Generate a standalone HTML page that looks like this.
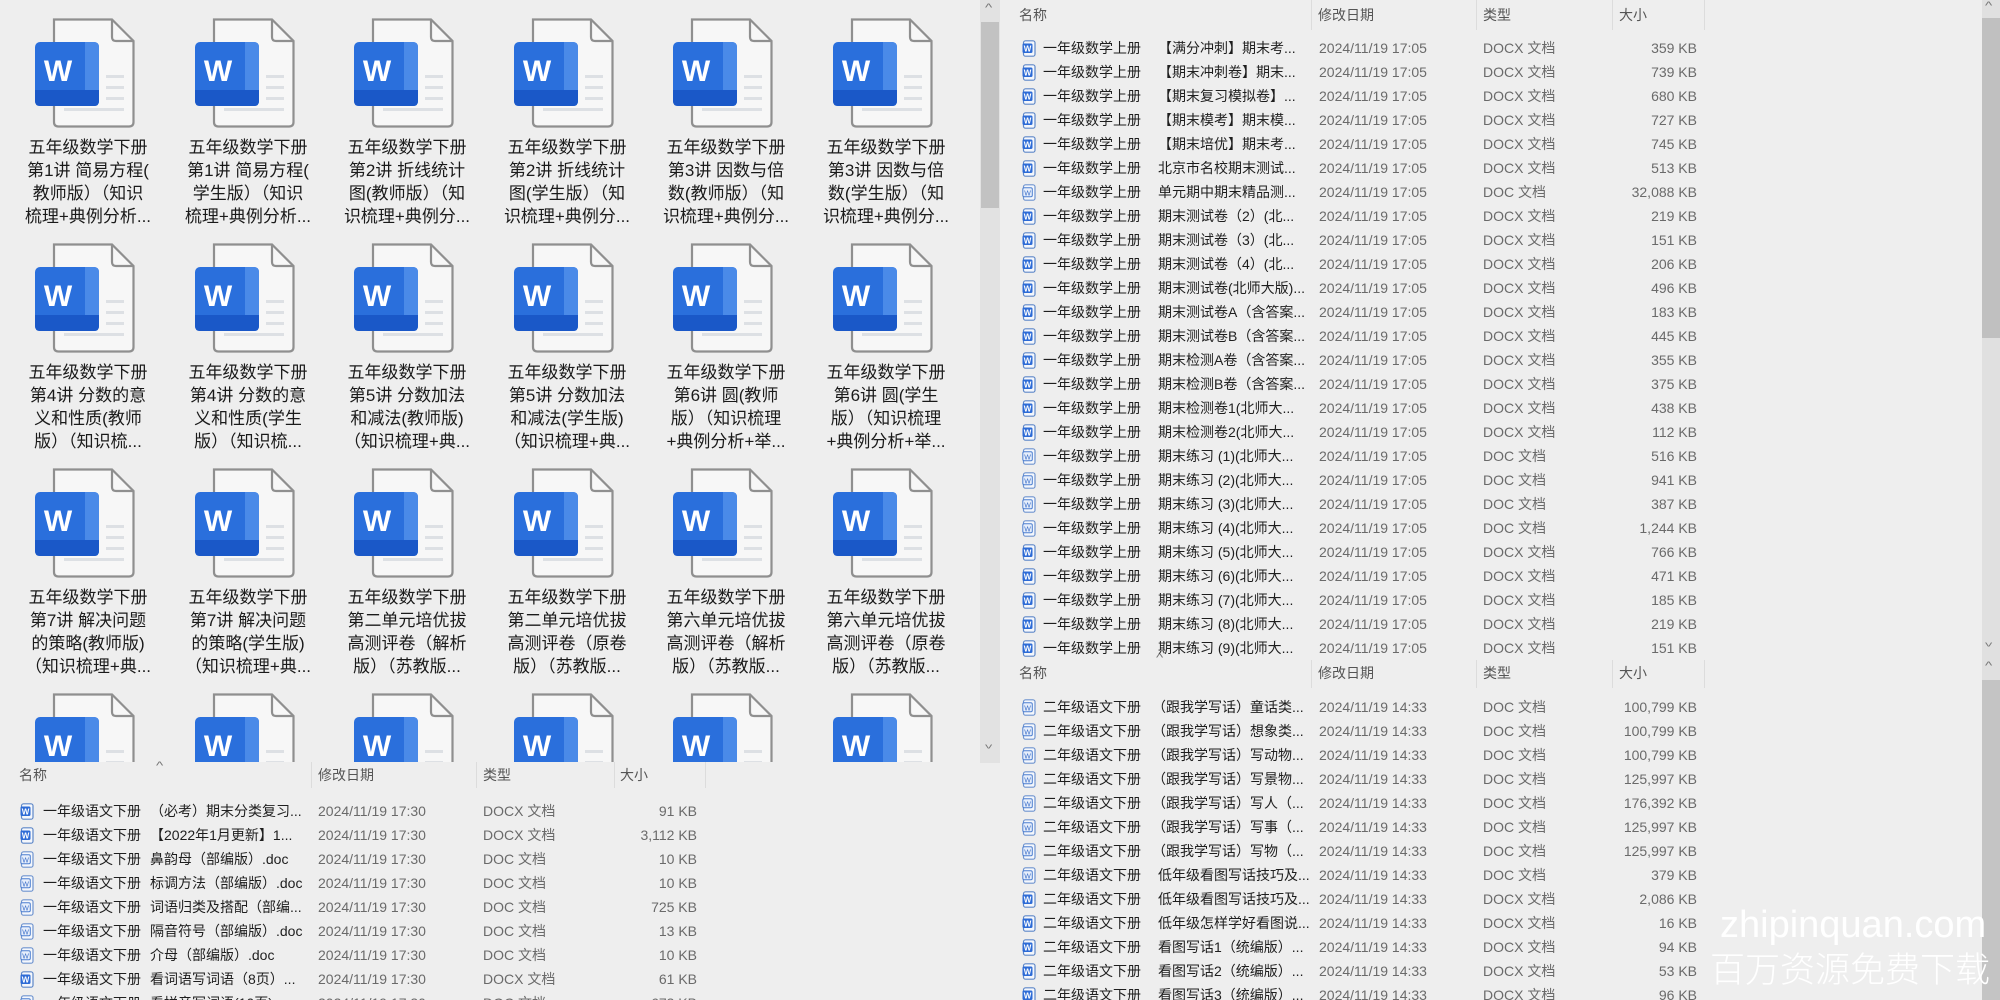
<!DOCTYPE html>
<html><head><meta charset="utf-8">
<style>
*{margin:0;padding:0;box-sizing:border-box}
body{width:2000px;height:1000px;overflow:hidden;background:#eeeeee;position:relative;font-family:"Liberation Sans","Noto Sans CJK SC",sans-serif;}
.a{position:absolute}
.lbl{position:absolute;width:150px;text-align:center;font-size:17px;line-height:23px;color:#1a1a1a;font-family:"Liberation Sans","Noto Sans CJK SC",sans-serif}
.ic{position:absolute;width:100px;height:110px}
.r{position:absolute;height:24px;line-height:24px;font-size:14px;white-space:nowrap}
.r span{position:absolute;top:0}
.n{color:#1e1e1e}
.g{color:#6a6a6a}
.sz{text-align:right;width:120px}
.si{position:absolute;top:4px;width:14px;height:17px}
.hd{position:absolute;font-size:14px;color:#555;height:24px;line-height:24px}
.sep{position:absolute;width:1px;background:#dcdcdc}
.car{position:absolute;font-size:11px;color:#777;transform:scaleX(1.4)}
</style></head><body>
<svg width="0" height="0" style="position:absolute">
<defs>
<symbol id="big" viewBox="0 0 100 110">
<path d="M19 1.5 H77 L98.5 23 V104 Q98.5 108.5 94 108.5 H23.5 Q19 108.5 19 104 Z" fill="#f7f7f7" stroke="#8f8f8f" stroke-width="2.2"/>
<path d="M77 1.5 V19 Q77 23 81 23 H98.5" fill="none" stroke="#8f8f8f" stroke-width="2.2"/>
<rect x="71" y="57" width="18" height="3" fill="#dde0e4"/>
<rect x="71" y="68" width="18" height="3" fill="#dde0e4"/>
<rect x="71" y="79" width="18" height="3" fill="#dde0e4"/>
<rect x="29" y="90" width="60" height="3" fill="#dde0e4"/>
<rect x="0" y="24" width="64" height="64" rx="5" fill="#2a6fdc"/>
<path d="M50 24 H59 Q64 24 64 29 V83 Q64 88 59 88 H50 Z" fill="#4a8ae8"/>
<path d="M0 72 H64 V83 Q64 88 59 88 H5 Q0 88 0 83 Z" fill="#1a58c8"/>
<text x="23" y="63" font-family="Liberation Sans" font-weight="bold" font-size="30" fill="#fff" text-anchor="middle">W</text>
</symbol>
<symbol id="sx" viewBox="0 0 14 17">
<rect x="1.5" y="0.8" width="11.5" height="15.4" rx="2" fill="#f4f7fc" stroke="#5d87c8" stroke-width="1.2"/>
<rect x="0.5" y="3.5" width="10" height="9.5" rx="1.5" fill="#2d6bd6"/>
<text x="5.5" y="11.5" font-family="Liberation Sans" font-weight="bold" font-size="8" fill="#fff" text-anchor="middle">W</text>
</symbol>
<symbol id="sd" viewBox="0 0 14 17">
<rect x="1.5" y="0.8" width="11.5" height="15.4" rx="2" fill="#f4f7fc" stroke="#6f94cf" stroke-width="1.2"/>
<rect x="0.8" y="3.8" width="9.5" height="9" rx="1.5" fill="#e6eefb" stroke="#4d7fd0" stroke-width="1"/>
<text x="5.5" y="11.3" font-family="Liberation Sans" font-size="7" fill="#3c6fc8" text-anchor="middle">W</text>
</symbol>
</defs></svg>

<!-- Left grid -->
<div class="a" style="left:0;top:0;width:980px;height:762px;overflow:hidden">
<svg class="ic" style="left:35px;top:18px"><use href="#big"/></svg>
<svg class="ic" style="left:195px;top:18px"><use href="#big"/></svg>
<svg class="ic" style="left:354px;top:18px"><use href="#big"/></svg>
<svg class="ic" style="left:514px;top:18px"><use href="#big"/></svg>
<svg class="ic" style="left:673px;top:18px"><use href="#big"/></svg>
<svg class="ic" style="left:833px;top:18px"><use href="#big"/></svg>
<svg class="ic" style="left:35px;top:243px"><use href="#big"/></svg>
<svg class="ic" style="left:195px;top:243px"><use href="#big"/></svg>
<svg class="ic" style="left:354px;top:243px"><use href="#big"/></svg>
<svg class="ic" style="left:514px;top:243px"><use href="#big"/></svg>
<svg class="ic" style="left:673px;top:243px"><use href="#big"/></svg>
<svg class="ic" style="left:833px;top:243px"><use href="#big"/></svg>
<svg class="ic" style="left:35px;top:468px"><use href="#big"/></svg>
<svg class="ic" style="left:195px;top:468px"><use href="#big"/></svg>
<svg class="ic" style="left:354px;top:468px"><use href="#big"/></svg>
<svg class="ic" style="left:514px;top:468px"><use href="#big"/></svg>
<svg class="ic" style="left:673px;top:468px"><use href="#big"/></svg>
<svg class="ic" style="left:833px;top:468px"><use href="#big"/></svg>
<svg class="ic" style="left:35px;top:693px"><use href="#big"/></svg>
<svg class="ic" style="left:195px;top:693px"><use href="#big"/></svg>
<svg class="ic" style="left:354px;top:693px"><use href="#big"/></svg>
<svg class="ic" style="left:514px;top:693px"><use href="#big"/></svg>
<svg class="ic" style="left:673px;top:693px"><use href="#big"/></svg>
<svg class="ic" style="left:833px;top:693px"><use href="#big"/></svg>

<div class="lbl" style="left:13px;top:136px">五年级数学下册<br>第1讲 简易方程(<br>教师版）（知识<br>梳理+典例分析...</div>
<div class="lbl" style="left:173px;top:136px">五年级数学下册<br>第1讲 简易方程(<br>学生版）（知识<br>梳理+典例分析...</div>
<div class="lbl" style="left:332px;top:136px">五年级数学下册<br>第2讲 折线统计<br>图(教师版）（知<br>识梳理+典例分...</div>
<div class="lbl" style="left:492px;top:136px">五年级数学下册<br>第2讲 折线统计<br>图(学生版）（知<br>识梳理+典例分...</div>
<div class="lbl" style="left:651px;top:136px">五年级数学下册<br>第3讲 因数与倍<br>数(教师版）（知<br>识梳理+典例分...</div>
<div class="lbl" style="left:811px;top:136px">五年级数学下册<br>第3讲 因数与倍<br>数(学生版）（知<br>识梳理+典例分...</div>

<div class="lbl" style="left:13px;top:361px">五年级数学下册<br>第4讲 分数的意<br>义和性质(教师<br>版）（知识梳...</div>
<div class="lbl" style="left:173px;top:361px">五年级数学下册<br>第4讲 分数的意<br>义和性质(学生<br>版）（知识梳...</div>
<div class="lbl" style="left:332px;top:361px">五年级数学下册<br>第5讲 分数加法<br>和减法(教师版)<br>（知识梳理+典...</div>
<div class="lbl" style="left:492px;top:361px">五年级数学下册<br>第5讲 分数加法<br>和减法(学生版)<br>（知识梳理+典...</div>
<div class="lbl" style="left:651px;top:361px">五年级数学下册<br>第6讲 圆(教师<br>版）（知识梳理<br>+典例分析+举...</div>
<div class="lbl" style="left:811px;top:361px">五年级数学下册<br>第6讲 圆(学生<br>版）（知识梳理<br>+典例分析+举...</div>

<div class="lbl" style="left:13px;top:586px">五年级数学下册<br>第7讲 解决问题<br>的策略(教师版)<br>（知识梳理+典...</div>
<div class="lbl" style="left:173px;top:586px">五年级数学下册<br>第7讲 解决问题<br>的策略(学生版)<br>（知识梳理+典...</div>
<div class="lbl" style="left:332px;top:586px">五年级数学下册<br>第二单元培优拔<br>高测评卷（解析<br>版）（苏教版...</div>
<div class="lbl" style="left:492px;top:586px">五年级数学下册<br>第二单元培优拔<br>高测评卷（原卷<br>版）（苏教版...</div>
<div class="lbl" style="left:651px;top:586px">五年级数学下册<br>第六单元培优拔<br>高测评卷（解析<br>版）（苏教版...</div>
<div class="lbl" style="left:811px;top:586px">五年级数学下册<br>第六单元培优拔<br>高测评卷（原卷<br>版）（苏教版...</div>
</div>
<!-- left scrollbar -->
<div class="a" style="left:980px;top:0;width:20px;height:763px;background:#e2e2e2"></div>
<div class="a" style="left:981px;top:22px;width:18px;height:186px;background:#c2c2c2"></div>
<div class="car" style="left:986px;top:2px">^</div>
<div class="car" style="left:986px;top:738px;transform:scaleX(1.4) rotate(180deg)">^</div>

<!-- bottom-left details -->
<div class="a" style="left:0;top:762px;width:980px;height:238px;background:#eeeeee">
<div class="car" style="left:157px;top:-2px">^</div>
<div class="hd" style="left:19px;top:1px">名称</div>
<div class="sep" style="left:311px;top:0;height:26px"></div>
<div class="hd" style="left:318px;top:1px">修改日期</div>
<div class="sep" style="left:476px;top:0;height:26px"></div>
<div class="hd" style="left:483px;top:1px">类型</div>
<div class="sep" style="left:614px;top:0;height:26px"></div>
<div class="hd" style="left:620px;top:1px">大小</div>
<div class="sep" style="left:705px;top:0;height:26px"></div>
</div>
<div class="a" style="left:0;top:799px;width:980px;height:201px;overflow:hidden">
<div class="r" style="top:0;width:980px"><svg class="si" style="left:20px"><use href="#sx"/></svg><span class="n" style="left:43px">一年级语文下册</span><span class="n" style="left:150px">（必考）期末分类复习...</span><span class="g" style="left:318px">2024/11/19 17:30</span><span class="g" style="left:483px">DOCX 文档</span><span class="g sz" style="left:577px">91 KB</span></div>
<div class="r" style="top:24px;width:980px"><svg class="si" style="left:20px"><use href="#sx"/></svg><span class="n" style="left:43px">一年级语文下册</span><span class="n" style="left:150px">【2022年1月更新】1...</span><span class="g" style="left:318px">2024/11/19 17:30</span><span class="g" style="left:483px">DOCX 文档</span><span class="g sz" style="left:577px">3,112 KB</span></div>
<div class="r" style="top:48px;width:980px"><svg class="si" style="left:20px"><use href="#sd"/></svg><span class="n" style="left:43px">一年级语文下册</span><span class="n" style="left:150px">鼻韵母（部编版）.doc</span><span class="g" style="left:318px">2024/11/19 17:30</span><span class="g" style="left:483px">DOC 文档</span><span class="g sz" style="left:577px">10 KB</span></div>
<div class="r" style="top:72px;width:980px"><svg class="si" style="left:20px"><use href="#sd"/></svg><span class="n" style="left:43px">一年级语文下册</span><span class="n" style="left:150px">标调方法（部编版）.doc</span><span class="g" style="left:318px">2024/11/19 17:30</span><span class="g" style="left:483px">DOC 文档</span><span class="g sz" style="left:577px">10 KB</span></div>
<div class="r" style="top:96px;width:980px"><svg class="si" style="left:20px"><use href="#sd"/></svg><span class="n" style="left:43px">一年级语文下册</span><span class="n" style="left:150px">词语归类及搭配（部编...</span><span class="g" style="left:318px">2024/11/19 17:30</span><span class="g" style="left:483px">DOC 文档</span><span class="g sz" style="left:577px">725 KB</span></div>
<div class="r" style="top:120px;width:980px"><svg class="si" style="left:20px"><use href="#sd"/></svg><span class="n" style="left:43px">一年级语文下册</span><span class="n" style="left:150px">隔音符号（部编版）.doc</span><span class="g" style="left:318px">2024/11/19 17:30</span><span class="g" style="left:483px">DOC 文档</span><span class="g sz" style="left:577px">13 KB</span></div>
<div class="r" style="top:144px;width:980px"><svg class="si" style="left:20px"><use href="#sd"/></svg><span class="n" style="left:43px">一年级语文下册</span><span class="n" style="left:150px">介母（部编版）.doc</span><span class="g" style="left:318px">2024/11/19 17:30</span><span class="g" style="left:483px">DOC 文档</span><span class="g sz" style="left:577px">10 KB</span></div>
<div class="r" style="top:168px;width:980px"><svg class="si" style="left:20px"><use href="#sx"/></svg><span class="n" style="left:43px">一年级语文下册</span><span class="n" style="left:150px">看词语写词语（8页）...</span><span class="g" style="left:318px">2024/11/19 17:30</span><span class="g" style="left:483px">DOCX 文档</span><span class="g sz" style="left:577px">61 KB</span></div>
<div class="r" style="top:192px;width:980px"><svg class="si" style="left:20px"><use href="#sd"/></svg><span class="n" style="left:43px">一年级语文下册</span><span class="n" style="left:150px">看拼音写词语(10页)...</span><span class="g" style="left:318px">2024/11/19 17:30</span><span class="g" style="left:483px">DOC 文档</span><span class="g sz" style="left:577px">673 KB</span></div>
</div>

<!-- right top -->
<div class="car" style="left:1157px;top:-6px">^</div>
<div class="hd" style="left:1019px;top:3px">名称</div>
<div class="sep" style="left:1311px;top:0;height:30px"></div>
<div class="hd" style="left:1318px;top:3px">修改日期</div>
<div class="sep" style="left:1476px;top:0;height:30px"></div>
<div class="hd" style="left:1483px;top:3px">类型</div>
<div class="sep" style="left:1612px;top:0;height:30px"></div>
<div class="hd" style="left:1619px;top:3px">大小</div>
<div class="sep" style="left:1704px;top:0;height:30px"></div>

<div class="a" style="left:1000px;top:36px;width:980px;height:624px">
<div class="r" style="top:0;width:980px"><svg class="si" style="left:22px"><use href="#sx"/></svg><span class="n" style="left:43px">一年级数学上册</span><span class="n" style="left:158px">【满分冲刺】期末考...</span><span class="g" style="left:319px">2024/11/19 17:05</span><span class="g" style="left:483px">DOCX 文档</span><span class="g sz" style="left:577px">359 KB</span></div>
<div class="r" style="top:24px;width:980px"><svg class="si" style="left:22px"><use href="#sx"/></svg><span class="n" style="left:43px">一年级数学上册</span><span class="n" style="left:158px">【期末冲刺卷】期末...</span><span class="g" style="left:319px">2024/11/19 17:05</span><span class="g" style="left:483px">DOCX 文档</span><span class="g sz" style="left:577px">739 KB</span></div>
<div class="r" style="top:48px;width:980px"><svg class="si" style="left:22px"><use href="#sx"/></svg><span class="n" style="left:43px">一年级数学上册</span><span class="n" style="left:158px">【期末复习模拟卷】...</span><span class="g" style="left:319px">2024/11/19 17:05</span><span class="g" style="left:483px">DOCX 文档</span><span class="g sz" style="left:577px">680 KB</span></div>
<div class="r" style="top:72px;width:980px"><svg class="si" style="left:22px"><use href="#sx"/></svg><span class="n" style="left:43px">一年级数学上册</span><span class="n" style="left:158px">【期末模考】期末模...</span><span class="g" style="left:319px">2024/11/19 17:05</span><span class="g" style="left:483px">DOCX 文档</span><span class="g sz" style="left:577px">727 KB</span></div>
<div class="r" style="top:96px;width:980px"><svg class="si" style="left:22px"><use href="#sx"/></svg><span class="n" style="left:43px">一年级数学上册</span><span class="n" style="left:158px">【期末培优】期末考...</span><span class="g" style="left:319px">2024/11/19 17:05</span><span class="g" style="left:483px">DOCX 文档</span><span class="g sz" style="left:577px">745 KB</span></div>
<div class="r" style="top:120px;width:980px"><svg class="si" style="left:22px"><use href="#sx"/></svg><span class="n" style="left:43px">一年级数学上册</span><span class="n" style="left:158px">北京市名校期末测试...</span><span class="g" style="left:319px">2024/11/19 17:05</span><span class="g" style="left:483px">DOCX 文档</span><span class="g sz" style="left:577px">513 KB</span></div>
<div class="r" style="top:144px;width:980px"><svg class="si" style="left:22px"><use href="#sd"/></svg><span class="n" style="left:43px">一年级数学上册</span><span class="n" style="left:158px">单元期中期末精品测...</span><span class="g" style="left:319px">2024/11/19 17:05</span><span class="g" style="left:483px">DOC 文档</span><span class="g sz" style="left:577px">32,088 KB</span></div>
<div class="r" style="top:168px;width:980px"><svg class="si" style="left:22px"><use href="#sx"/></svg><span class="n" style="left:43px">一年级数学上册</span><span class="n" style="left:158px">期末测试卷（2）(北...</span><span class="g" style="left:319px">2024/11/19 17:05</span><span class="g" style="left:483px">DOCX 文档</span><span class="g sz" style="left:577px">219 KB</span></div>
<div class="r" style="top:192px;width:980px"><svg class="si" style="left:22px"><use href="#sx"/></svg><span class="n" style="left:43px">一年级数学上册</span><span class="n" style="left:158px">期末测试卷（3）(北...</span><span class="g" style="left:319px">2024/11/19 17:05</span><span class="g" style="left:483px">DOCX 文档</span><span class="g sz" style="left:577px">151 KB</span></div>
<div class="r" style="top:216px;width:980px"><svg class="si" style="left:22px"><use href="#sx"/></svg><span class="n" style="left:43px">一年级数学上册</span><span class="n" style="left:158px">期末测试卷（4）(北...</span><span class="g" style="left:319px">2024/11/19 17:05</span><span class="g" style="left:483px">DOCX 文档</span><span class="g sz" style="left:577px">206 KB</span></div>
<div class="r" style="top:240px;width:980px"><svg class="si" style="left:22px"><use href="#sx"/></svg><span class="n" style="left:43px">一年级数学上册</span><span class="n" style="left:158px">期末测试卷(北师大版)...</span><span class="g" style="left:319px">2024/11/19 17:05</span><span class="g" style="left:483px">DOCX 文档</span><span class="g sz" style="left:577px">496 KB</span></div>
<div class="r" style="top:264px;width:980px"><svg class="si" style="left:22px"><use href="#sx"/></svg><span class="n" style="left:43px">一年级数学上册</span><span class="n" style="left:158px">期末测试卷A（含答案...</span><span class="g" style="left:319px">2024/11/19 17:05</span><span class="g" style="left:483px">DOCX 文档</span><span class="g sz" style="left:577px">183 KB</span></div>
<div class="r" style="top:288px;width:980px"><svg class="si" style="left:22px"><use href="#sx"/></svg><span class="n" style="left:43px">一年级数学上册</span><span class="n" style="left:158px">期末测试卷B（含答案...</span><span class="g" style="left:319px">2024/11/19 17:05</span><span class="g" style="left:483px">DOCX 文档</span><span class="g sz" style="left:577px">445 KB</span></div>
<div class="r" style="top:312px;width:980px"><svg class="si" style="left:22px"><use href="#sx"/></svg><span class="n" style="left:43px">一年级数学上册</span><span class="n" style="left:158px">期末检测A卷（含答案...</span><span class="g" style="left:319px">2024/11/19 17:05</span><span class="g" style="left:483px">DOCX 文档</span><span class="g sz" style="left:577px">355 KB</span></div>
<div class="r" style="top:336px;width:980px"><svg class="si" style="left:22px"><use href="#sx"/></svg><span class="n" style="left:43px">一年级数学上册</span><span class="n" style="left:158px">期末检测B卷（含答案...</span><span class="g" style="left:319px">2024/11/19 17:05</span><span class="g" style="left:483px">DOCX 文档</span><span class="g sz" style="left:577px">375 KB</span></div>
<div class="r" style="top:360px;width:980px"><svg class="si" style="left:22px"><use href="#sx"/></svg><span class="n" style="left:43px">一年级数学上册</span><span class="n" style="left:158px">期末检测卷1(北师大...</span><span class="g" style="left:319px">2024/11/19 17:05</span><span class="g" style="left:483px">DOCX 文档</span><span class="g sz" style="left:577px">438 KB</span></div>
<div class="r" style="top:384px;width:980px"><svg class="si" style="left:22px"><use href="#sx"/></svg><span class="n" style="left:43px">一年级数学上册</span><span class="n" style="left:158px">期末检测卷2(北师大...</span><span class="g" style="left:319px">2024/11/19 17:05</span><span class="g" style="left:483px">DOCX 文档</span><span class="g sz" style="left:577px">112 KB</span></div>
<div class="r" style="top:408px;width:980px"><svg class="si" style="left:22px"><use href="#sd"/></svg><span class="n" style="left:43px">一年级数学上册</span><span class="n" style="left:158px">期末练习 (1)(北师大...</span><span class="g" style="left:319px">2024/11/19 17:05</span><span class="g" style="left:483px">DOC 文档</span><span class="g sz" style="left:577px">516 KB</span></div>
<div class="r" style="top:432px;width:980px"><svg class="si" style="left:22px"><use href="#sd"/></svg><span class="n" style="left:43px">一年级数学上册</span><span class="n" style="left:158px">期末练习 (2)(北师大...</span><span class="g" style="left:319px">2024/11/19 17:05</span><span class="g" style="left:483px">DOC 文档</span><span class="g sz" style="left:577px">941 KB</span></div>
<div class="r" style="top:456px;width:980px"><svg class="si" style="left:22px"><use href="#sd"/></svg><span class="n" style="left:43px">一年级数学上册</span><span class="n" style="left:158px">期末练习 (3)(北师大...</span><span class="g" style="left:319px">2024/11/19 17:05</span><span class="g" style="left:483px">DOC 文档</span><span class="g sz" style="left:577px">387 KB</span></div>
<div class="r" style="top:480px;width:980px"><svg class="si" style="left:22px"><use href="#sd"/></svg><span class="n" style="left:43px">一年级数学上册</span><span class="n" style="left:158px">期末练习 (4)(北师大...</span><span class="g" style="left:319px">2024/11/19 17:05</span><span class="g" style="left:483px">DOC 文档</span><span class="g sz" style="left:577px">1,244 KB</span></div>
<div class="r" style="top:504px;width:980px"><svg class="si" style="left:22px"><use href="#sx"/></svg><span class="n" style="left:43px">一年级数学上册</span><span class="n" style="left:158px">期末练习 (5)(北师大...</span><span class="g" style="left:319px">2024/11/19 17:05</span><span class="g" style="left:483px">DOCX 文档</span><span class="g sz" style="left:577px">766 KB</span></div>
<div class="r" style="top:528px;width:980px"><svg class="si" style="left:22px"><use href="#sx"/></svg><span class="n" style="left:43px">一年级数学上册</span><span class="n" style="left:158px">期末练习 (6)(北师大...</span><span class="g" style="left:319px">2024/11/19 17:05</span><span class="g" style="left:483px">DOCX 文档</span><span class="g sz" style="left:577px">471 KB</span></div>
<div class="r" style="top:552px;width:980px"><svg class="si" style="left:22px"><use href="#sx"/></svg><span class="n" style="left:43px">一年级数学上册</span><span class="n" style="left:158px">期末练习 (7)(北师大...</span><span class="g" style="left:319px">2024/11/19 17:05</span><span class="g" style="left:483px">DOCX 文档</span><span class="g sz" style="left:577px">185 KB</span></div>
<div class="r" style="top:576px;width:980px"><svg class="si" style="left:22px"><use href="#sx"/></svg><span class="n" style="left:43px">一年级数学上册</span><span class="n" style="left:158px">期末练习 (8)(北师大...</span><span class="g" style="left:319px">2024/11/19 17:05</span><span class="g" style="left:483px">DOCX 文档</span><span class="g sz" style="left:577px">219 KB</span></div>
<div class="r" style="top:600px;width:980px"><svg class="si" style="left:22px"><use href="#sx"/></svg><span class="n" style="left:43px">一年级数学上册</span><span class="n" style="left:158px">期末练习 (9)(北师大...</span><span class="g" style="left:319px">2024/11/19 17:05</span><span class="g" style="left:483px">DOCX 文档</span><span class="g sz" style="left:577px">151 KB</span></div>
</div>
<!-- right top scrollbar -->
<div class="a" style="left:1982px;top:0;width:18px;height:662px;background:#e0e0e0"></div>
<div class="a" style="left:1982px;top:18px;width:18px;height:320px;background:#c0c0c0"></div>
<div class="car" style="left:1986px;top:0px">^</div>
<div class="car" style="left:1986px;top:636px;transform:scaleX(1.4) rotate(180deg)">^</div>

<!-- right bottom -->
<div class="car" style="left:1157px;top:652px">^</div>
<div class="hd" style="left:1019px;top:661px">名称</div>
<div class="sep" style="left:1311px;top:660px;height:28px"></div>
<div class="hd" style="left:1318px;top:661px">修改日期</div>
<div class="sep" style="left:1476px;top:660px;height:28px"></div>
<div class="hd" style="left:1483px;top:661px">类型</div>
<div class="sep" style="left:1612px;top:660px;height:28px"></div>
<div class="hd" style="left:1619px;top:661px">大小</div>
<div class="sep" style="left:1704px;top:660px;height:28px"></div>

<div class="a" style="left:1000px;top:695px;width:980px;height:305px;overflow:hidden">
<div class="r" style="top:0;width:980px"><svg class="si" style="left:22px"><use href="#sd"/></svg><span class="n" style="left:43px">二年级语文下册</span><span class="n" style="left:152px">（跟我学写话）童话类...</span><span class="g" style="left:319px">2024/11/19 14:33</span><span class="g" style="left:483px">DOC 文档</span><span class="g sz" style="left:577px">100,799 KB</span></div>
<div class="r" style="top:24px;width:980px"><svg class="si" style="left:22px"><use href="#sd"/></svg><span class="n" style="left:43px">二年级语文下册</span><span class="n" style="left:152px">（跟我学写话）想象类...</span><span class="g" style="left:319px">2024/11/19 14:33</span><span class="g" style="left:483px">DOC 文档</span><span class="g sz" style="left:577px">100,799 KB</span></div>
<div class="r" style="top:48px;width:980px"><svg class="si" style="left:22px"><use href="#sd"/></svg><span class="n" style="left:43px">二年级语文下册</span><span class="n" style="left:152px">（跟我学写话）写动物...</span><span class="g" style="left:319px">2024/11/19 14:33</span><span class="g" style="left:483px">DOC 文档</span><span class="g sz" style="left:577px">100,799 KB</span></div>
<div class="r" style="top:72px;width:980px"><svg class="si" style="left:22px"><use href="#sd"/></svg><span class="n" style="left:43px">二年级语文下册</span><span class="n" style="left:152px">（跟我学写话）写景物...</span><span class="g" style="left:319px">2024/11/19 14:33</span><span class="g" style="left:483px">DOC 文档</span><span class="g sz" style="left:577px">125,997 KB</span></div>
<div class="r" style="top:96px;width:980px"><svg class="si" style="left:22px"><use href="#sd"/></svg><span class="n" style="left:43px">二年级语文下册</span><span class="n" style="left:152px">（跟我学写话）写人（...</span><span class="g" style="left:319px">2024/11/19 14:33</span><span class="g" style="left:483px">DOC 文档</span><span class="g sz" style="left:577px">176,392 KB</span></div>
<div class="r" style="top:120px;width:980px"><svg class="si" style="left:22px"><use href="#sd"/></svg><span class="n" style="left:43px">二年级语文下册</span><span class="n" style="left:152px">（跟我学写话）写事（...</span><span class="g" style="left:319px">2024/11/19 14:33</span><span class="g" style="left:483px">DOC 文档</span><span class="g sz" style="left:577px">125,997 KB</span></div>
<div class="r" style="top:144px;width:980px"><svg class="si" style="left:22px"><use href="#sd"/></svg><span class="n" style="left:43px">二年级语文下册</span><span class="n" style="left:152px">（跟我学写话）写物（...</span><span class="g" style="left:319px">2024/11/19 14:33</span><span class="g" style="left:483px">DOC 文档</span><span class="g sz" style="left:577px">125,997 KB</span></div>
<div class="r" style="top:168px;width:980px"><svg class="si" style="left:22px"><use href="#sd"/></svg><span class="n" style="left:43px">二年级语文下册</span><span class="n" style="left:158px">低年级看图写话技巧及...</span><span class="g" style="left:319px">2024/11/19 14:33</span><span class="g" style="left:483px">DOC 文档</span><span class="g sz" style="left:577px">379 KB</span></div>
<div class="r" style="top:192px;width:980px"><svg class="si" style="left:22px"><use href="#sx"/></svg><span class="n" style="left:43px">二年级语文下册</span><span class="n" style="left:158px">低年级看图写话技巧及...</span><span class="g" style="left:319px">2024/11/19 14:33</span><span class="g" style="left:483px">DOCX 文档</span><span class="g sz" style="left:577px">2,086 KB</span></div>
<div class="r" style="top:216px;width:980px"><svg class="si" style="left:22px"><use href="#sx"/></svg><span class="n" style="left:43px">二年级语文下册</span><span class="n" style="left:158px">低年级怎样学好看图说...</span><span class="g" style="left:319px">2024/11/19 14:33</span><span class="g" style="left:483px">DOCX 文档</span><span class="g sz" style="left:577px">16 KB</span></div>
<div class="r" style="top:240px;width:980px"><svg class="si" style="left:22px"><use href="#sx"/></svg><span class="n" style="left:43px">二年级语文下册</span><span class="n" style="left:158px">看图写话1（统编版）...</span><span class="g" style="left:319px">2024/11/19 14:33</span><span class="g" style="left:483px">DOCX 文档</span><span class="g sz" style="left:577px">94 KB</span></div>
<div class="r" style="top:264px;width:980px"><svg class="si" style="left:22px"><use href="#sx"/></svg><span class="n" style="left:43px">二年级语文下册</span><span class="n" style="left:158px">看图写话2（统编版）...</span><span class="g" style="left:319px">2024/11/19 14:33</span><span class="g" style="left:483px">DOCX 文档</span><span class="g sz" style="left:577px">53 KB</span></div>
<div class="r" style="top:288px;width:980px"><svg class="si" style="left:22px"><use href="#sx"/></svg><span class="n" style="left:43px">二年级语文下册</span><span class="n" style="left:158px">看图写话3（统编版）...</span><span class="g" style="left:319px">2024/11/19 14:33</span><span class="g" style="left:483px">DOCX 文档</span><span class="g sz" style="left:577px">96 KB</span></div>
</div>
<!-- right bottom scrollbar -->
<div class="a" style="left:1982px;top:662px;width:18px;height:338px;background:#e0e0e0"></div>
<div class="a" style="left:1982px;top:680px;width:18px;height:320px;background:#c4c4c4"></div>
<div class="car" style="left:1986px;top:660px">^</div>

<!-- watermark -->
<div class="a" style="left:1720px;top:902px;font-family:'Liberation Sans',sans-serif;font-size:38px;color:#fff;line-height:46px;white-space:nowrap">zhipinquan.com</div>
<div class="a" style="left:1710px;top:948px;font-family:'Liberation Sans','Noto Sans CJK SC',sans-serif;font-weight:300;font-size:35px;color:#fff;line-height:46px;white-space:nowrap">百万资源免费下载</div>
</body></html>
